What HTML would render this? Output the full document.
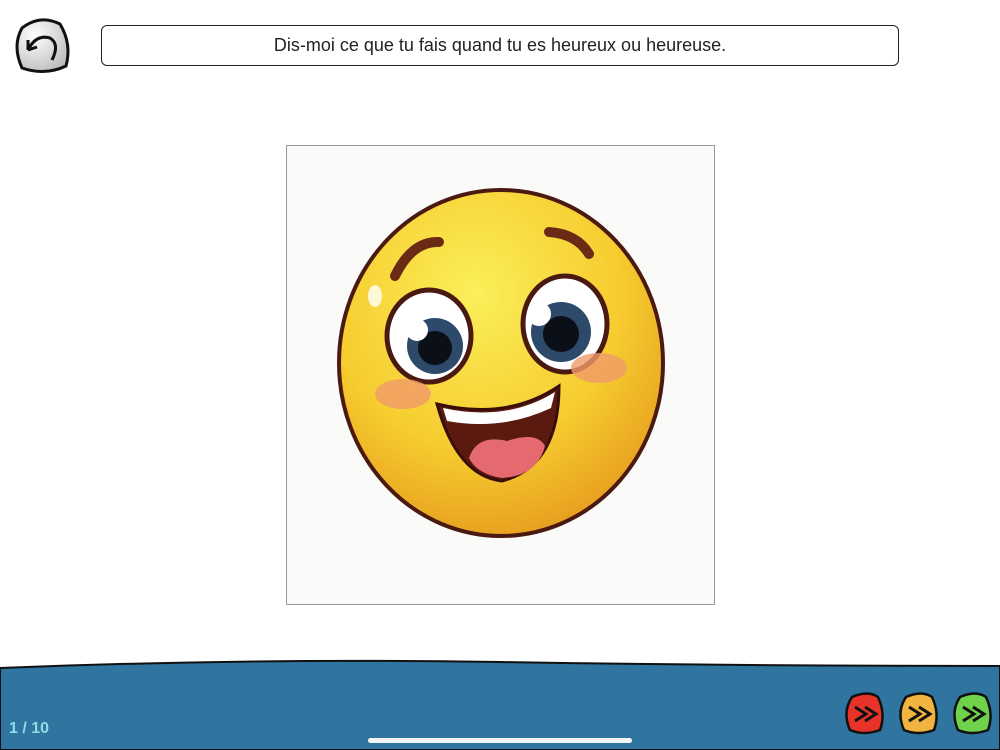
<!DOCTYPE html>
<html><head><style>
body{margin:0;width:1000px;height:750px;overflow:hidden;background:#fff;font-family:"Liberation Sans",sans-serif;position:relative}
.q{position:absolute;left:101px;top:25px;width:796px;height:39px;border:1.5px solid #222;border-radius:6px;text-align:center;line-height:39px;font-size:18px;color:#222}
.img{position:absolute;left:286px;top:145px;width:427px;height:458px;border:1px solid #999;background:#fafaf9}
.pg{position:absolute;left:9px;top:720px;color:#8fdce8;font-size:16px;font-weight:bold}
.bar{position:absolute;left:368px;top:738px;width:264px;height:5px;border-radius:3px;background:#f4f4f4}
</style></head><body>
<svg width="1000" height="750" style="position:absolute;left:0;top:0">
<defs>
<radialGradient id="f" cx="0.42" cy="0.3" r="0.75"><stop offset="0" stop-color="#fbef5a"/><stop offset="0.6" stop-color="#f6cc2f"/><stop offset="1" stop-color="#e69a1e"/></radialGradient>
<radialGradient id="g" cx="0.35" cy="0.3" r="0.8"><stop offset="0" stop-color="#fff"/><stop offset="1" stop-color="#bbb"/></radialGradient>
</defs>
<path d="M0 668 Q250 658 500 662 T1000 666 L1000 750 L0 750Z" fill="#2f75a0" stroke="#111" stroke-width="2"/>
<path d="M22 28 Q40 14 60 24 Q72 44 66 66 Q45 76 22 68 Q12 46 22 28Z" fill="url(#g)" stroke="#111" stroke-width="3"/>
<path d="M28 50 Q36 34 50 38 Q60 44 52 60 M28 50 L28 40 M28 50 L37 47" fill="none" stroke="#111" stroke-width="3"/>
</svg>
<div class="q">Dis-moi ce que tu fais quand tu es heureux ou heureuse.</div>
<div class="img"><svg width="427" height="458">
<ellipse cx="214" cy="217" rx="162" ry="173" fill="url(#f)" stroke="#4a1a10" stroke-width="4"/>
<path d="M108 130 Q125 95 152 96" stroke="#6a2a14" stroke-width="10" fill="none" stroke-linecap="round"/>
<path d="M262 86 Q290 88 302 108" stroke="#6a2a14" stroke-width="10" fill="none" stroke-linecap="round"/>
<ellipse cx="142" cy="190" rx="42" ry="46" fill="#fff" stroke="#4a1a10" stroke-width="5"/>
<ellipse cx="278" cy="178" rx="42" ry="48" fill="#fff" stroke="#4a1a10" stroke-width="5"/>
<circle cx="148" cy="200" r="28" fill="#2d4a6a"/><circle cx="148" cy="202" r="17" fill="#0a0f18"/>
<circle cx="274" cy="186" r="30" fill="#2d4a6a"/><circle cx="274" cy="188" r="18" fill="#0a0f18"/>
<circle cx="130" cy="184" r="11" fill="#fff"/><circle cx="252" cy="168" r="12" fill="#fff"/>
<ellipse cx="116" cy="248" rx="28" ry="15" fill="#f09a6a" opacity="0.8"/>
<ellipse cx="312" cy="222" rx="28" ry="15" fill="#f09a6a" opacity="0.8"/>
<path d="M150 258 Q220 275 272 240 Q272 320 215 335 Q170 330 150 258Z" fill="#5a1a10" stroke="#3a0e08" stroke-width="3"/>
<path d="M156 262 Q220 276 268 246 L264 262 Q215 285 160 275Z" fill="#fff"/>
<path d="M182 312 Q190 288 220 295 Q250 285 258 300 Q250 330 215 332 Q190 328 182 312Z" fill="#e56a70"/>
<ellipse cx="88" cy="150" rx="7" ry="11" fill="#fff" opacity="0.8"/>
</svg></div>
<svg width="1000" height="750" style="position:absolute;left:0;top:0">
<g stroke="#111" stroke-width="2.5">
<path d="M852 697 Q868 690 878 697 Q886 714 880 730 Q864 736 850 730 Q842 712 852 697Z" fill="#e8332a"/>
<path d="M906 697 Q922 690 932 697 Q940 714 934 730 Q918 736 904 730 Q896 712 906 697Z" fill="#f2b440"/>
<path d="M960 697 Q976 690 986 697 Q994 714 988 730 Q972 736 958 730 Q950 712 960 697Z" fill="#6ed24a"/>
</g>
<g fill="none" stroke="#111" stroke-width="3">
<path d="M855 707 L866 714 L855 721 M865 707 L876 714 L865 721"/>
<path d="M909 707 L920 714 L909 721 M919 707 L930 714 L919 721"/>
<path d="M963 707 L974 714 L963 721 M973 707 L984 714 L973 721"/>
</g>
</svg>
<div class="pg">1 / 10</div>
<div class="bar"></div>
</body></html>
